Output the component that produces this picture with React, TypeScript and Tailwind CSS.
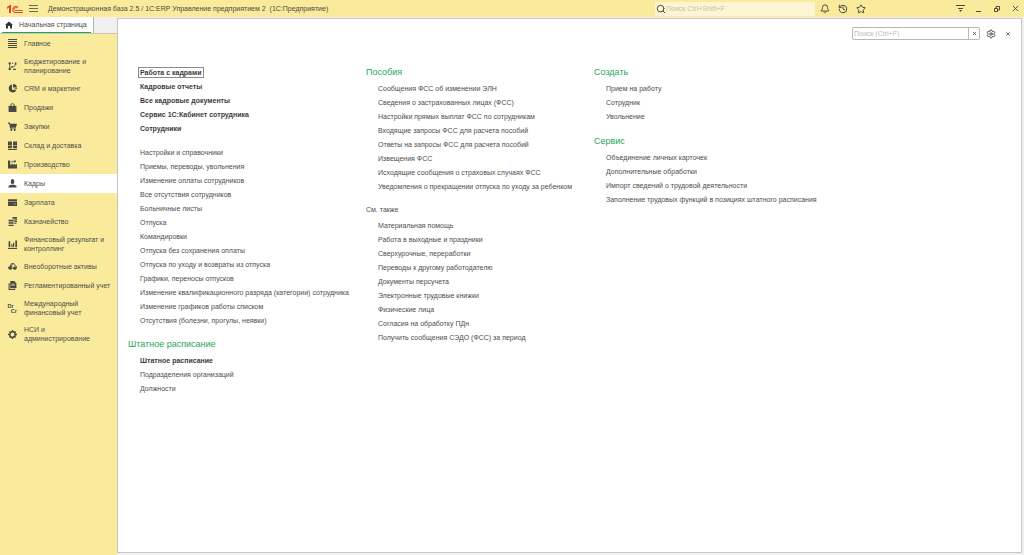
import type { ReactNode } from "react";
import { Bell, History, Search, Settings, Star, X } from "lucide-react";

type Link = { label: string; bold?: boolean; focused?: boolean };

const sections: { label: string; icon: ReactNode; active?: boolean }[] = [
  {
    label: "Главное",
    icon: (
      <path d="M0 0h16v1.780H0zM0 3.560h16v1.780H0zM0 7.110h16v1.780H0zM0 10.670h16v1.780H0zM0 14.220h16V16H0z" />
    ),
  },
  {
    label: "Бюджетирование и планирование",
    icon: (
      <>
        <path d="M3 3v10M3 12l4-4 3 1 4-5" fill="none" stroke="currentColor" strokeWidth="1.5" />
        <path d="M1 1h4v3H1zM1 11h4v3H1zM7 1h2v2H7zM12 1h3v4h-3zM9 12h5v2H9zM6 7h2v3H6z" />
      </>
    ),
  },
  {
    label: "CRM и маркетинг",
    icon: <path d="M7 1a7 7 0 1 0 8 9H7zM9 0v6h7a7 7 0 0 0-7-6zM9 7l7 2V7z" />,
  },
  {
    label: "Продажи",
    icon: (
      <>
        <path d="M1 5h14v11H1z" />
        <path d="M5 6V4a3 3 0 0 1 6 0v2" fill="none" stroke="currentColor" strokeWidth="1.6" />
      </>
    ),
  },
  {
    label: "Закупки",
    icon: (
      <>
        <path d="M0 1h3l1 2h12l-2 7H5l1 1h8v1H4L2 3H0z" />
        <circle cx="6" cy="14" r="1.8" />
        <circle cx="12" cy="14" r="1.8" />
      </>
    ),
  },
  {
    label: "Склад и доставка",
    icon: <path d="M0 1h7v6H0zM9 1h7v6H9zM0 8h7v5H0zM9 8h7v5H9zM0 14h16v2H0z" />,
  },
  {
    label: "Производство",
    icon: <path d="M0 15V1h4v8l4-3v3l4-3v3l4-2v8zM6 2h3v2H6zM10 1h4v3h-4z" />,
  },
  {
    label: "Кадры",
    active: true,
    icon: (
      <>
        <path d="M5 3a3 3 0 0 1 6 0v3a3 3 0 0 1-6 0z" />
        <path d="M1 15v-3l4-2h6l4 2v3z" />
      </>
    ),
  },
  {
    label: "Зарплата",
    icon: <path d="M0 2h16v4H0zM0 7h16v7H0zM10 10v1h4v-1z" fillRule="evenodd" />,
  },
  {
    label: "Казначейство",
    icon: <path d="M8 0h8v3H8zM11 4h5v2h-5zM11 7h5v2h-5zM11 10h4v2h-4zM1 5h9v2H1zM1 8h9v2H1zM1 11h9v2H1zM1 14h9v2H1z" />,
  },
  {
    label: "Финансовый результат и контроллинг",
    icon: <path d="M1 2h3v11H1zM6 7h2v6H6zM9 5h2v8H9zM13 1h3v12h-3zM0 14h16v2H0z" />,
  },
  {
    label: "Внеоборотные активы",
    icon: (
      <>
        <path d="M3 9l3-6h5l2 4 2 1v3H1V9zM7 3v5H4" fill="none" stroke="currentColor" strokeWidth="1.6" />
        <circle cx="4" cy="11" r="2.800" />
        <circle cx="12" cy="11" r="2.800" />
      </>
    ),
  },
  {
    label: "Регламентированный учет",
    icon: <path d="M1 4h2v10h10v2H1zM4 0h7l4 4v9H4zM6 5v1h6V5zM6 8v1h6V8z" fillRule="evenodd" />,
  },
  {
    label: "Международный финансовый учет",
    icon: (
      <g fontFamily="Liberation Sans, Arial, sans-serif" fontSize="10" fontWeight="700">
        <text x="-1" y="7">Dr</text>
        <text x="5" y="16">Cr</text>
      </g>
    ),
  },
  {
    label: "НСИ и администрирование",
    icon: (
      <>
        <circle cx="8" cy="8" r="4.800" fill="none" stroke="currentColor" strokeWidth="2.600" />
        <path
          d="M8 0v3M8 13v3M0 8h3M13 8h3M2.500 2.500l2 2M11.500 11.500l2 2M2.500 13.500l2-2M11.500 4.500l2-2"
          stroke="currentColor"
          strokeWidth="2.600"
        />
      </>
    ),
  },
];

const main: Link[] = [
  { label: "Работа с кадрами", bold: true, focused: true },
  { label: "Кадровые отчеты", bold: true },
  { label: "Все кадровые документы", bold: true },
  { label: "Сервис 1С:Кабинет сотрудника", bold: true },
  { label: "Сотрудники", bold: true },
];

const personnel: Link[] = [
  { label: "Настройки и справочники" },
  { label: "Приемы, переводы, увольнения" },
  { label: "Изменение оплаты сотрудников" },
  { label: "Все отсутствия сотрудников" },
  { label: "Больничные листы" },
  { label: "Отпуска" },
  { label: "Командировки" },
  { label: "Отпуска без сохранения оплаты" },
  { label: "Отпуска по уходу и возвраты из отпуска" },
  { label: "Графики, переносы отпусков" },
  { label: "Изменение квалификационного разряда (категории) сотрудника" },
  { label: "Изменение графиков работы списком" },
  { label: "Отсутствия (болезни, прогулы, неявки)" },
];

const staffing: Link[] = [
  { label: "Штатное расписание", bold: true },
  { label: "Подразделения организаций" },
  { label: "Должности" },
];

const benefits: Link[] = [
  { label: "Сообщения ФСС об изменении ЭЛН" },
  { label: "Сведения о застрахованных лицах (ФСС)" },
  { label: "Настройки прямых выплат ФСС по сотрудникам" },
  { label: "Входящие запросы ФСС для расчета пособий" },
  { label: "Ответы на запросы ФСС для расчета пособий" },
  { label: "Извещения ФСС" },
  { label: "Исходящие сообщения о страховых случаях ФСС" },
  { label: "Уведомления о прекращении отпуска по уходу за ребенком" },
];

const seeAlso: Link[] = [
  { label: "Материальная помощь" },
  { label: "Работа в выходные и праздники" },
  { label: "Сверхурочные, переработки" },
  { label: "Переводы к другому работодателю" },
  { label: "Документы персучета" },
  { label: "Электронные трудовые книжки" },
  { label: "Физические лица" },
  { label: "Согласия на обработку ПДн" },
  { label: "Получить сообщения СЭДО (ФСС) за период" },
];

const create: Link[] = [
  { label: "Прием на работу" },
  { label: "Сотрудник" },
  { label: "Увольнение" },
];

const service: Link[] = [
  { label: "Объединение личных карточек" },
  { label: "Дополнительные обработки" },
  { label: "Импорт сведений о трудовой деятельности" },
  { label: "Заполнение трудовых функций в позициях штатного расписания" },
];

function LinkList({ items }: { items: Link[] }) {
  return (
    <ul className="pl-[10px]">
      {items.map((item) => (
        <li key={item.label} className="flex h-[14px] items-center">
          <a
            href="#"
            className={`border px-px leading-[9px] whitespace-nowrap ${
              item.focused ? "border-[#8a8a8a]" : "border-transparent"
            } ${item.bold ? "font-bold text-[#3c3c3c]" : ""}`}
          >
            {item.label}
          </a>
        </li>
      ))}
    </ul>
  );
}

function Heading({ children }: { children: ReactNode }) {
  return (
    <h2 className="mb-px h-4 text-[9px] leading-4 whitespace-nowrap text-[#1fa557]">{children}</h2>
  );
}

function TitleBar() {
  return (
    <header className="flex h-[17px] items-center bg-[#faeb9c] text-[#4a4a3c]">
      <svg viewBox="0 0 16 9" className="ml-[7px] h-[9px] w-4" fill="none" stroke="#e0452f">
        <path d="M0 3l3-2h1v8H2V3.500L0 5z" fill="#e0452f" stroke="none" />
        <path d="M11 3.500a3 3 0 1 0-3 5h8" strokeWidth="1.100" />
        <path d="M9.500 4a1.400 1.400 0 1 0-1.500 2.500h8" strokeWidth="0.900" />
      </svg>
      <button aria-label="Главное меню" className="ml-[6px]">
        <svg viewBox="0 0 9 9" className="size-[9px]" fill="currentColor">
          <path d="M0 1h9v1H0zM0 4h9v1H0zM0 7h9v1H0z" opacity="0.8" />
        </svg>
      </button>
      <h1 className="ml-[10px] flex-1 text-[7px] leading-[9px] whitespace-pre">
        Демонстрационная база 2.5 / 1C:ERP Управление предприятием 2  (1С:Предприятие)
      </h1>
      <label className="flex h-[14px] w-40 items-center bg-[#fef6d3] pl-px">
        <Search size={10} strokeWidth={2.4} className="shrink-0" />
        <input
          aria-label="Поиск"
          placeholder="Поиск Ctrl+Shift+F"
          className="h-[14px] w-full bg-transparent text-[7px] outline-none placeholder:text-[#c4bfa6]"
        />
      </label>
      <div className="ml-[5px] flex items-center gap-2">
        <button aria-label="Уведомления"><Bell size={10} strokeWidth={2.4} /></button>
        <button aria-label="История"><History size={10} strokeWidth={2.4} /></button>
        <button aria-label="Избранное"><Star size={10} strokeWidth={2.4} /></button>
      </div>
      <div className="mr-1 ml-[90px] flex items-center gap-[10px]">
        <button aria-label="Настройки окна">
          <svg viewBox="0 0 9 9" className="size-[9px]" fill="currentColor">
            <path d="M0 1h9v1H0zM2 4h5v1H2zM3 6h3L4.500 8z" />
          </svg>
        </button>
        <button aria-label="Свернуть">
          <svg viewBox="0 0 8 8" className="size-2" fill="currentColor">
            <path d="M1 6h5v1H1z" />
          </svg>
        </button>
        <button aria-label="Развернуть">
          <svg viewBox="0 0 8 8" className="size-2" fill="none" stroke="currentColor">
            <path d="M1.500 3.500h3v3h-3zM3 3V1.500h3.500V5H5" />
          </svg>
        </button>
        <button aria-label="Закрыть"><X size={9} strokeWidth={2.4} /></button>
      </div>
    </header>
  );
}

function Sidebar() {
  return (
    <aside className="flex w-[117px] shrink-0 flex-col bg-[#faeb9c]">
      <div className="flex h-[17px] border-b border-[#c9c6b4] bg-[#f0f0f0]">
        <a href="#" className="flex w-[94px] border-r border-[#b5b5b5] bg-white px-[2px]">
          <span className="flex flex-1 items-center border-b border-[#1fa557] pl-[3px]">
            <svg viewBox="0 0 16 16" className="size-2" fill="#333">
              <path d="M8 1l8 7h-2v7h-4v-5H6v5H2V8H0z" />
            </svg>
            <span className="ml-[6px] leading-[9px] whitespace-nowrap">Начальная страница</span>
          </span>
        </a>
      </div>
      <nav>
        {sections.map((s) => (
          <a
            key={s.label}
            href="#"
            className={`flex min-h-[19px] items-center py-1 pl-2 ${s.active ? "bg-white" : ""}`}
          >
            <svg
              viewBox="0 0 16 16"
              className="size-[9px] shrink-0 overflow-visible text-[#4a4a42]"
              fill="currentColor"
            >
              {s.icon}
            </svg>
            <span className="ml-[7px] max-w-[87px] leading-[9px]">{s.label}</span>
          </a>
        ))}
      </nav>
    </aside>
  );
}

export default function App() {
  return (
    <div className="flex min-h-screen flex-col bg-[#f0f0f0] font-['Liberation_Sans',Arial,sans-serif] text-[7px] text-[#4d4d4d]">
      <TitleBar />
      <div className="flex flex-1">
        <Sidebar />
        <div className="flex min-w-0 flex-1 pt-px pr-[2px] pb-[2px]">
          <main className="flex-1 border border-[#c6c6c6] bg-white">
            {/* Panel toolbar */}
            <div className="flex items-center justify-end pt-2 pr-[10px]">
              <div className="flex h-[13px] w-32 rounded-xs border border-[#b8b8b8]">
                <input
                  aria-label="Поиск по меню"
                  placeholder="Поиск (Ctrl+F)"
                  className="min-w-0 flex-1 px-px pt-px outline-none placeholder:text-[#bdbdbd]"
                />
                <button
                  aria-label="Очистить"
                  className="flex w-[11px] items-center justify-center border-l border-[#b8b8b8]"
                >
                  <X size={5} strokeWidth={4} />
                </button>
              </div>
              <button aria-label="Настройки" className="ml-[6px]">
                <Settings size={10} strokeWidth={2.4} />
              </button>
              <button aria-label="Закрыть меню" className="ml-[9px]">
                <X size={6} strokeWidth={3} />
              </button>
            </div>

            {/* Command groups */}
            <div className="flex pt-6 pl-[10px]">
              <div className="w-[238px] pt-px">
                <LinkList items={main} />
                <div className="mt-[10px]">
                  <LinkList items={personnel} />
                </div>
                <div className="mt-[9px]">
                  <Heading>Штатное расписание</Heading>
                  <LinkList items={staffing} />
                </div>
              </div>
              <div className="w-[228px]">
                <Heading>Пособия</Heading>
                <LinkList items={benefits} />
                <h3 className="mt-[10px] mb-px leading-[14px]">См. также</h3>
                <LinkList items={seeAlso} />
              </div>
              <div>
                <Heading>Создать</Heading>
                <LinkList items={create} />
                <div className="mt-[10px]">
                  <Heading>Сервис</Heading>
                  <LinkList items={service} />
                </div>
              </div>
            </div>
          </main>
        </div>
      </div>
    </div>
  );
}
